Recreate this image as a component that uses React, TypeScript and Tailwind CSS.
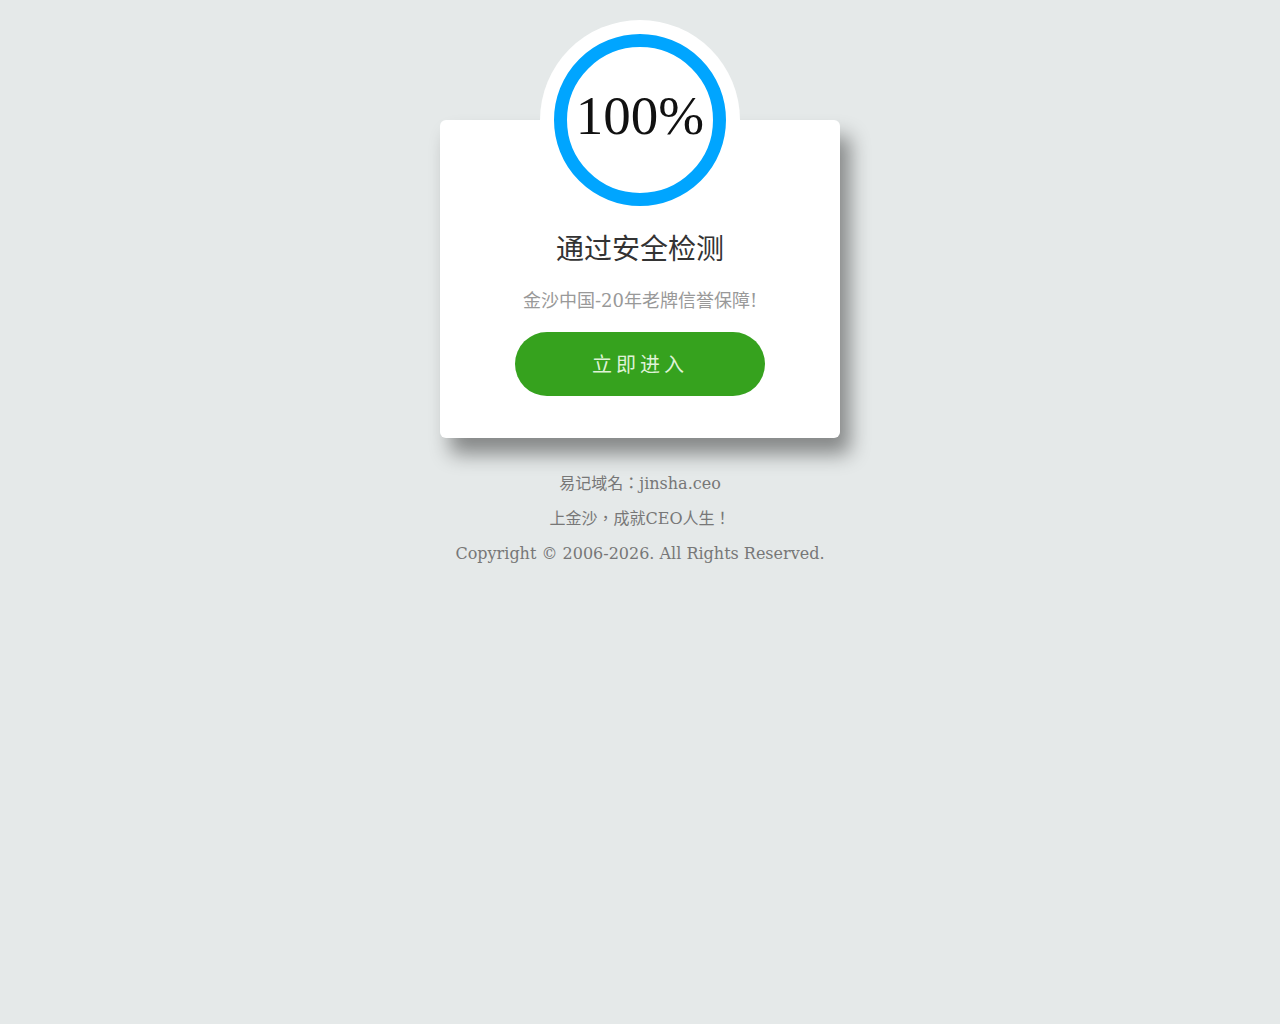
import React from "react";

export default function App() {
  return (
    <div className="min-h-[1024px] w-full bg-[#e5e9e9] flex flex-col items-center pt-5 font-['DejaVu_Serif','Noto_Sans_CJK_TC',serif]">
      {/* progress ring sits half over the card */}
      <div className="w-[200px] h-[200px] rounded-full bg-white flex items-center justify-center relative z-10">
        <div className="w-[172px] h-[172px] rounded-full border-[13px] border-[#00a5ff] flex items-center justify-center">
          <span className="text-[55px] leading-none text-[#111] pb-[10px] font-['Liberation_Serif',serif]">100%</span>
        </div>
      </div>
      <div className="w-[400px] -mt-[100px] pt-[100px] pb-[42px] bg-white rounded-md shadow-[10px_16px_20px_rgba(0,0,0,0.42)] flex flex-col items-center">
        <div className="mt-[10px] text-[28px] leading-[34px] text-[#333] font-['Noto_Sans_CJK_SC',sans-serif]">
          通过安全检测
        </div>
        <div className="mt-[25px] text-[18px] leading-[24px] text-[#999] font-['DejaVu_Serif','Noto_Sans_CJK_SC',serif]">
          金沙中国-20年老牌信誉保障!
        </div>
        <button className="mt-[19px] w-[250px] h-[64px] rounded-full bg-[#36a21e] text-[20px] tracking-[4px] text-[#dff2d6] flex items-center justify-center font-['Noto_Sans_CJK_SC',sans-serif]">
          立即进入
        </button>
      </div>
      <div className="mt-[28px] flex flex-col items-center text-[16px] leading-[35px] text-[#777]">
        <div>易记域名：jinsha.ceo</div>
        <div>上金沙，成就CEO人生！</div>
        <div>Copyright © 2006-2026. All Rights Reserved.</div>
      </div>
    </div>
  );
}
